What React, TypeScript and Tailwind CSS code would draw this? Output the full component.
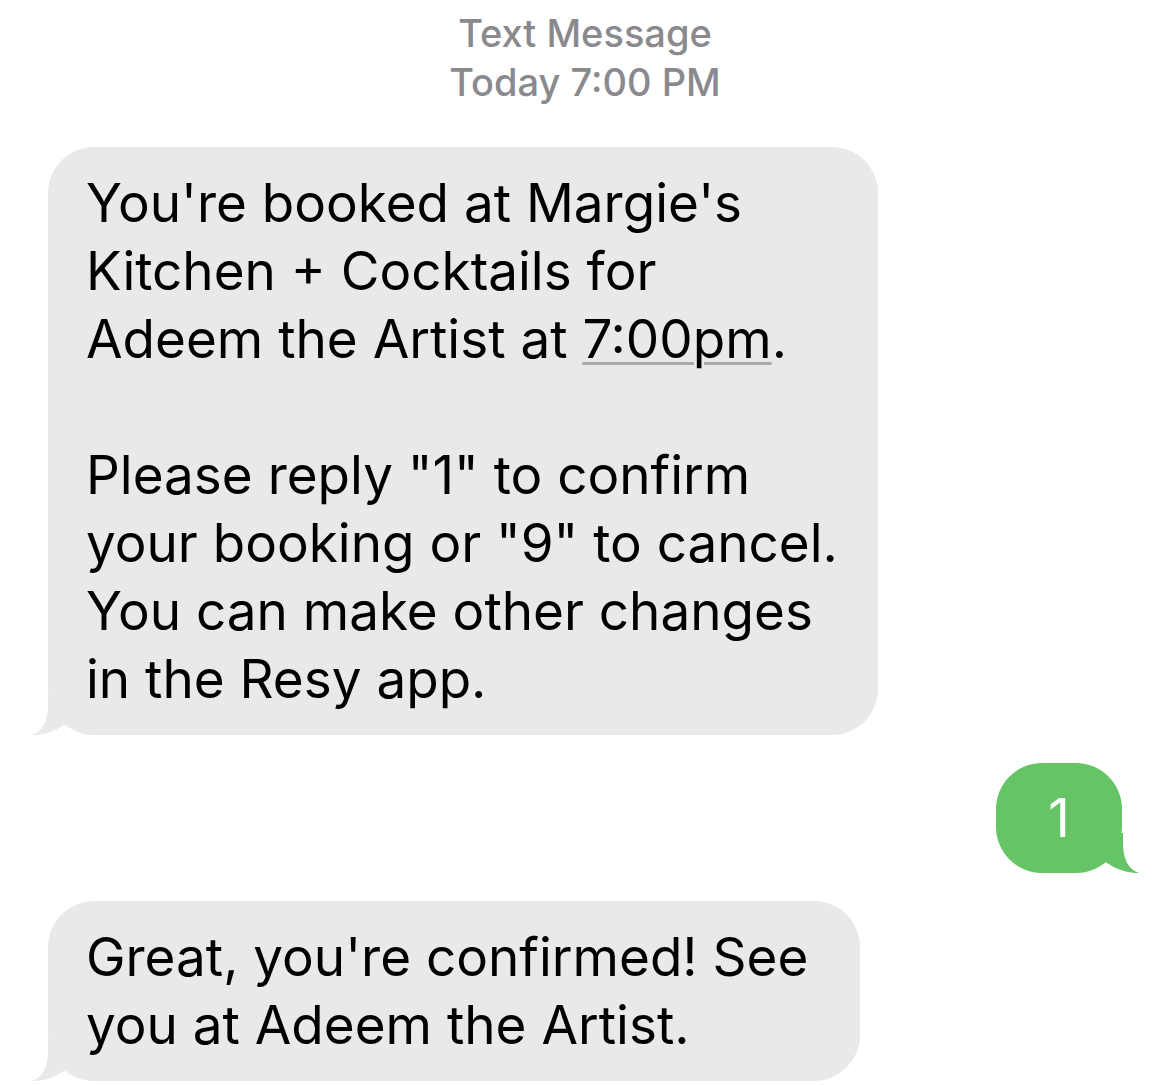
const FONT = { fontFamily: "Inter, 'Noto Sans', sans-serif" };

function LeftTail({ color }: { color: string }) {
  return (
    <svg
      className="absolute bottom-0 left-[-16px] h-[40px] w-[40px]"
      viewBox="0 0 40 40"
    >
      <path
        d="M16,0 L16,10 C16,28 9,37 0,40 C13,40.5 26,35 36,27 L36,0 Z"
        fill={color}
      />
    </svg>
  );
}

function RightTail({ color }: { color: string }) {
  return (
    <svg
      className="absolute bottom-0 right-[-17px] h-[40px] w-[40px] -scale-x-100"
      viewBox="0 0 40 40"
    >
      <path
        d="M16,0 L16,10 C16,28 9,37 0,40 C13,40.5 26,35 36,27 L36,0 Z"
        fill={color}
      />
    </svg>
  );
}

export default function App() {
  return (
    <div
      className="h-[1085px] w-full overflow-hidden bg-white text-black antialiased"
      style={FONT}
    >
      {/* header */}
      <div className="pt-[9px] text-center text-[38px] font-medium leading-[49px] text-[#8a8a8e]">
        <div>Text Message</div>
        <div>Today 7:00 PM</div>
      </div>

      <div className="flex flex-col px-[48px]">
        {/* incoming */}
        <div className="relative mt-[40px] w-[830px] whitespace-nowrap rounded-[46px] bg-[#e9e9eb] py-[22px] pl-[38px] pr-[30px] text-[53px] leading-[68px]">
          <p>
            You're booked at Margie's
            <br />
            Kitchen + Cocktails for
            <br />
            Adeem the Artist at{" "}
            <span className="underline decoration-[#a9a9a9] decoration-[3px] underline-offset-[4px]">
              7:00pm
            </span>
            .
          </p>
          <p className="mt-[68px]">
            Please reply "1" to confirm
            <br />
            your booking or "9" to cancel.
            <br />
            You can make other changes
            <br />
            in the Resy app.
          </p>
          <LeftTail color="#e9e9eb" />
        </div>

        {/* outgoing */}
        <div className="mt-[28px] flex justify-end">
          <div className="relative flex h-[110px] w-[126px] items-center justify-center rounded-[46px] bg-[#65c466] text-[53px] leading-[68px] text-white">
            1
            <RightTail color="#65c466" />
          </div>
        </div>

        {/* incoming */}
        <div className="relative mt-[28px] w-[812px] whitespace-nowrap rounded-[46px] bg-[#e9e9eb] py-[22px] pl-[38px] pr-[30px] text-[53px] leading-[68px]">
          <p>
            Great, you're confirmed! See
            <br />
            you at Adeem the Artist.
          </p>
          <LeftTail color="#e9e9eb" />
        </div>
      </div>
    </div>
  );
}
